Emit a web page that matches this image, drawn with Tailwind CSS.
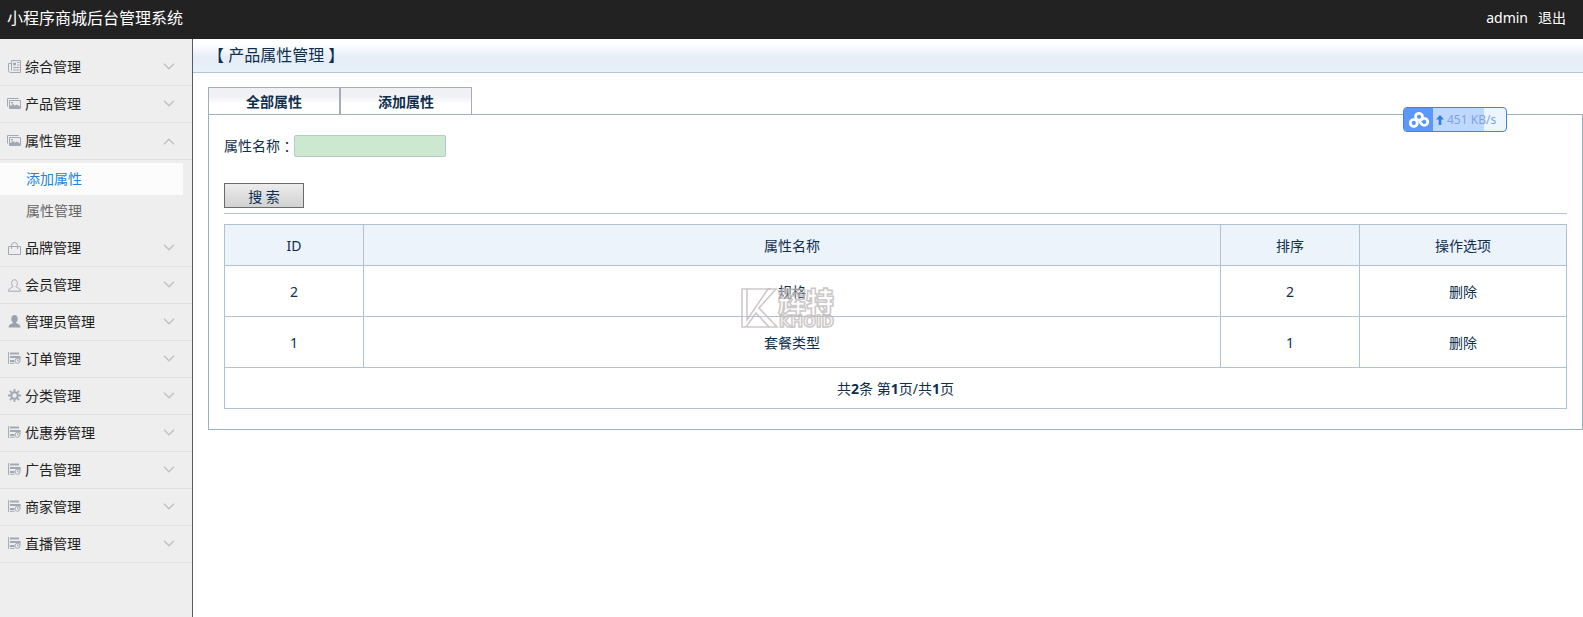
<!DOCTYPE html>
<html lang="zh-CN">
<head>
    <meta charset="UTF-8">
    <meta name="viewport" content="width=device-width, initial-scale=1.0">
    <title>小程序商城后台管理系统</title>
    <script src="https://cdn.jsdelivr.net/npm/@tailwindcss/browser@4"></script>
</head>
<body class="min-h-screen flex flex-col bg-white text-sm text-[#0f2f4f] font-['Noto_Sans','Noto_Sans_CJK_SC',sans-serif]">
    <!-- icons -->
    <svg class="hidden" aria-hidden="true">
        <symbol id="i-news" viewBox="0 0 13 13"><path d="M3.5.5h9v12h-10a2 2 0 0 1-2-2v-7h3zM3.5 3.5v7" fill="none" stroke="#a3a9b4"/><path d="M5.500 3h2v2h-2z" fill="#a3a9b4" stroke="#a3a9b4"/><path d="M9 2.500h2.500M9 5h2.500M5 7.500h6.500M5 10h6.500" stroke="#a3a9b4"/></symbol>
        <symbol id="i-pic" viewBox="0 0 14 11"><path d="M.5 8.500v-8h11M2.500 2.500h11v8h-11z" fill="none" stroke="#a3a9b4"/><path d="M3 10V8l3-2 2 1.500 2-1 3 2V10zM4 4h2v1.500H4z" fill="#a3a9b4"/></symbol>
        <symbol id="i-bag" viewBox="0 0 13 13"><path d="M.5 4.500h12v8H.5zM3.500 7V3.500a3 3 0 0 1 6 0V7" fill="none" stroke="#a3a9b4"/></symbol>
        <symbol id="i-user" viewBox="0 0 13 13"><path d="M5 7.500C3 6 3 .8 6.500.8S10 6 8 7.500c0 1.500 4.500 1 4.500 4.700H.5C.5 8.500 5 9 5 7.500z" fill="none" stroke="#a3a9b4"/></symbol>
        <symbol id="i-admin" viewBox="0 0 13 13"><path d="M5 7.500C2.500 6 2.500 0 6.500 0S10.500 6 8 7.500c0 1.500 4.500 1 4.500 5H.5c0-4 4.500-3.500 4.500-5z" fill="#9aa2ae"/></symbol>
        <symbol id="i-list" viewBox="0 0 13 12"><path d="M.6 0v12" stroke="#a3a9b4"/><path d="M2 1.500h9M2 5h10.500M2 9h4.500" fill="none" stroke="#a3a9b4" stroke-width="1.800"/><path d="M2 11.300h4.500M12 5v3" fill="none" stroke="#a3a9b4"/><circle cx="9.500" cy="8.800" r="2.500" fill="#eee" stroke="#a3a9b4"/><path d="M9.500 7.200v1.800H11" fill="none" stroke="#a3a9b4" stroke-width=".8"/></symbol>
        <symbol id="i-gear" viewBox="0 0 13 13"><g fill="none" stroke="#a3a9b4"><circle cx="6.500" cy="6.500" r="3.200" stroke-width="2"/><path d="M6.500 0v3M6.500 10v3M0 6.500h3M10 6.500h3M1.900 1.900L4 4M9 9l2.100 2.100M1.900 11.100L4 9M9 4l2.100-2.100" stroke-width="1.800"/></g></symbol>
        <symbol id="i-down" viewBox="0 0 12 7"><path d="M1 .8l5 5 5-5" fill="none" stroke="#c0c0c0" stroke-width="1.300"/></symbol>
        <symbol id="i-up" viewBox="0 0 12 7"><path d="M1 6.200l5-5 5 5" fill="none" stroke="#c0c0c0" stroke-width="1.300"/></symbol>
    </svg>

    <header class="flex h-[39px] items-center justify-between bg-[#222] pl-[7px] pr-[17px] text-white">
        <h1 class="text-base leading-5 pb-1">小程序商城后台管理系统</h1>
        <div class="flex gap-2.5 pb-[3px]">
            <a href="#">admin</a>
            <a href="#">退出</a>
        </div>
    </header>

    <div class="flex flex-1">
        <nav class="w-[193px] shrink-0 border-r border-[#555b60] bg-[#eee] pt-2.5 text-[#222]">
            <button type="button" class="flex h-[37px] w-full items-center gap-1 border-b border-[#dfe1e2] pl-2 pr-[17px]"><svg class="mb-0.5 h-[13px] w-[13px]"><use href="#i-news"/></svg><span class="flex-1 text-left">综合管理</span><svg class="mb-0.5 h-[7px] w-3"><use href="#i-down"/></svg></button>
            <button type="button" class="flex h-[37px] w-full items-center gap-1 border-b border-[#dfe1e2] pl-[7px] pr-[17px]"><svg class="mb-0.5 h-[11px] w-3.5"><use href="#i-pic"/></svg><span class="flex-1 text-left">产品管理</span><svg class="mb-0.5 h-[7px] w-3"><use href="#i-down"/></svg></button>
            <button type="button" class="flex h-[37px] w-full items-center gap-1 border-b border-[#dfe1e2] pl-[7px] pr-[17px]"><svg class="mb-0.5 h-[11px] w-3.5"><use href="#i-pic"/></svg><span class="flex-1 text-left">属性管理</span><svg class="h-[7px] w-3"><use href="#i-up"/></svg></button>
            <div class="py-[3px] pr-[9px]">
                <a href="#" class="block h-8 bg-[#fcfcfc] pl-[26px] leading-8 text-[#2183e2]">添加属性</a>
                <a href="#" class="block h-8 pl-[26px] leading-8 text-[#666]">属性管理</a>
            </div>
            <button type="button" class="flex h-[37px] w-full items-center gap-1 border-b border-[#dfe1e2] pl-2 pr-[17px]"><svg class="h-[13px] w-[13px]"><use href="#i-bag"/></svg><span class="flex-1 text-left">品牌管理</span><svg class="mb-0.5 h-[7px] w-3"><use href="#i-down"/></svg></button>
            <button type="button" class="flex h-[37px] w-full items-center gap-1 border-b border-[#dfe1e2] pl-2 pr-[17px]"><svg class="h-[13px] w-[13px]"><use href="#i-user"/></svg><span class="flex-1 text-left">会员管理</span><svg class="mb-0.5 h-[7px] w-3"><use href="#i-down"/></svg></button>
            <button type="button" class="flex h-[37px] w-full items-center gap-1 border-b border-[#dfe1e2] pl-2 pr-[17px]"><svg class="mb-0.5 h-[13px] w-[13px]"><use href="#i-admin"/></svg><span class="flex-1 text-left">管理员管理</span><svg class="mb-0.5 h-[7px] w-3"><use href="#i-down"/></svg></button>
            <button type="button" class="flex h-[37px] w-full items-center gap-1 border-b border-[#dfe1e2] pl-2 pr-[17px]"><svg class="mb-0.5 h-3 w-[13px]"><use href="#i-list"/></svg><span class="flex-1 text-left">订单管理</span><svg class="mb-0.5 h-[7px] w-3"><use href="#i-down"/></svg></button>
            <button type="button" class="flex h-[37px] w-full items-center gap-1 border-b border-[#dfe1e2] pl-2 pr-[17px]"><svg class="mb-0.5 h-[13px] w-[13px]"><use href="#i-gear"/></svg><span class="flex-1 text-left">分类管理</span><svg class="mb-0.5 h-[7px] w-3"><use href="#i-down"/></svg></button>
            <button type="button" class="flex h-[37px] w-full items-center gap-1 border-b border-[#dfe1e2] pl-2 pr-[17px]"><svg class="mb-0.5 h-3 w-[13px]"><use href="#i-list"/></svg><span class="flex-1 text-left">优惠券管理</span><svg class="mb-0.5 h-[7px] w-3"><use href="#i-down"/></svg></button>
            <button type="button" class="flex h-[37px] w-full items-center gap-1 border-b border-[#dfe1e2] pl-2 pr-[17px]"><svg class="mb-0.5 h-3 w-[13px]"><use href="#i-list"/></svg><span class="flex-1 text-left">广告管理</span><svg class="mb-0.5 h-[7px] w-3"><use href="#i-down"/></svg></button>
            <button type="button" class="flex h-[37px] w-full items-center gap-1 border-b border-[#dfe1e2] pl-2 pr-[17px]"><svg class="mb-0.5 h-3 w-[13px]"><use href="#i-list"/></svg><span class="flex-1 text-left">商家管理</span><svg class="mb-0.5 h-[7px] w-3"><use href="#i-down"/></svg></button>
            <button type="button" class="flex h-[37px] w-full items-center gap-1 border-b border-[#dfe1e2] pl-2 pr-[17px]"><svg class="mb-0.5 h-3 w-[13px]"><use href="#i-list"/></svg><span class="flex-1 text-left">直播管理</span><svg class="mb-0.5 h-[7px] w-3"><use href="#i-down"/></svg></button>
        </nav>

        <main class="min-w-0 flex-1">
            <h2 class="h-[34px] border-b border-[#b4c6d6] bg-linear-to-b from-white from-15% via-[#e6edf8] via-55% to-[#e6f1f9] pl-[15px] text-base leading-8">【 产品属性管理 】</h2>

            <div class="pl-[15px] pt-3.5">
                <div class="flex font-bold">
                    <a href="#" class="h-[27px] w-[132px] border border-b-0 border-[#a3aeb8] bg-linear-to-b from-[#f0f0f5] via-[#f0f0f5] via-30% to-white to-60% text-center leading-7">全部属性</a>
                    <a href="#" class="h-[27px] w-[132px] border border-b-0 border-[#a3aeb8] bg-linear-to-b from-[#f0f0f5] via-[#f0f0f5] via-30% to-white to-60% text-center leading-7">添加属性</a>
                </div>

                <section class="relative border border-[#9fb0b7] px-[15px] pb-5 pt-5">
                    <form>
                        <div class="flex h-[22px] items-center">
                            <label for="attrName" class="flex w-[70px] whitespace-nowrap leading-[22px]">属性名称<span lang="zh-TW" class="font-['Noto_Sans_CJK_TC',sans-serif]">：</span></label>
                            <input type="text" id="attrName" class="h-[22px] w-[152px] rounded-xs border border-[#b5c8ca] bg-[#cce8cf] px-1">
                        </div>
                        <button type="button" class="mt-[26px] block h-[25px] w-20 border border-[#6b6b6b] bg-linear-to-b from-[#ececec] to-[#d2d2d2] pt-0.5 leading-5">搜 索</button>
                    </form>
                    <hr class="mb-2.5 mt-[5px] border-[#b4c3cf]">

                    <table class="w-full table-fixed border-collapse text-center">
                        <thead>
                            <tr class="h-[41px] bg-[#ecf3fb]">
                                <th class="w-[139px] border border-[#b0c1d0] pt-0.5 font-normal">ID</th>
                                <th class="border border-[#b0c1d0] pt-0.5 font-normal">属性名称</th>
                                <th class="w-[139px] border border-[#b0c1d0] pt-0.5 font-normal">排序</th>
                                <th class="w-[207px] border border-[#b0c1d0] pt-0.5 font-normal">操作选项</th>
                            </tr>
                        </thead>
                        <tbody>
                            <tr class="h-[51px]">
                                <td class="border border-[#b0c1d0] pt-0.5">2</td>
                                <td class="border border-[#b0c1d0] pt-0.5">规格</td>
                                <td class="border border-[#b0c1d0] pt-0.5">2</td>
                                <td class="border border-[#b0c1d0] pt-0.5"><a href="#">删除</a></td>
                            </tr>
                            <tr class="h-[51px]">
                                <td class="border border-[#b0c1d0] pt-0.5">1</td>
                                <td class="border border-[#b0c1d0] pt-0.5">套餐类型</td>
                                <td class="border border-[#b0c1d0] pt-0.5">1</td>
                                <td class="border border-[#b0c1d0] pt-0.5"><a href="#">删除</a></td>
                            </tr>
                            <tr class="h-[41px]">
                                <td colspan="4" class="border border-[#b0c1d0] pt-0.5">共<b>2</b>条 第<b>1</b>页/共<b>1</b>页</td>
                            </tr>
                        </tbody>
                    </table>

                    <!-- watermark -->
                    <svg class="pointer-events-none absolute left-[532px] top-[173px] h-10 w-24 overflow-visible" viewBox="0 0 96 40">
                        <g fill="#fff" fill-opacity=".2" stroke="#bcb6b6" stroke-opacity=".75" stroke-width="1.600">
                            <path d="M1 1h5v31L27 1h8L18 20l18 19h-8L15 25 5 39H1z"/>
                            <path d="M6 1h24M6 39h22" fill="none"/>
                            <text x="37" y="25" font-size="28" font-weight="900" font-family="Noto Sans CJK SC, sans-serif">辉特</text>
                            <text x="38" y="39" font-size="15" font-weight="bold" font-family="DejaVu Sans, sans-serif">KHOID</text>
                        </g>
                    </svg>

                    <!-- upload speed -->
                    <div class="absolute -top-2 right-[75px] flex h-[25px] w-[104px] items-center overflow-hidden rounded border border-[#3d85e0] bg-linear-to-r from-[#bfd8ff] from-78% to-[#eef5ff] to-78% text-xs text-[#7fa3e0]">
                        <span class="flex h-full w-[29px] items-center justify-center bg-[#5c98fa]">
                            <svg class="h-4 w-5" viewBox="0 0 20 16" fill="none" stroke="#fff" stroke-width="2.700"><circle cx="10" cy="4.800" r="3.500"/><circle cx="4.800" cy="11" r="3.500"/><path d="M10.500 9.300L13 12.500a3.500 3.500 0 1 0-1-4"/></svg>
                        </span>
                        <svg class="ml-[3px] h-2.5 w-2" viewBox="0 0 8 10"><path d="M4 0l4 4.500H5.300V10H2.700V4.500H0z" fill="#2f7de8"/></svg>
                        <span class="ml-[3px] whitespace-nowrap">451 KB/s</span>
                    </div>
                </section>
            </div>
        </main>
    </div>
</body>
</html>
